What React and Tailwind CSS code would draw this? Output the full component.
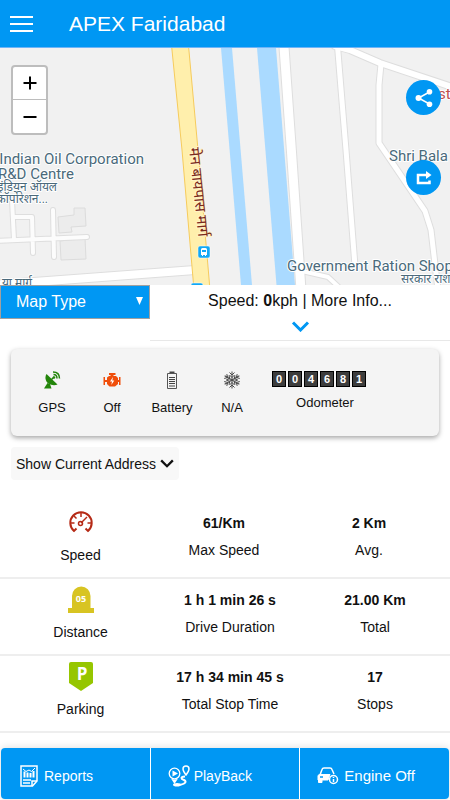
import React from "react";

const MapView = () => (
    <svg
        className="block w-full h-[237px] bg-[#f1f1f1]"
        viewBox="0 48 450 237"
        preserveAspectRatio="xMidYMid slice"
        role="img"
        aria-label="Map"
    >
        {/* water */}
        <path d="M221 48H232L252 285H241Z" fill="#aadaff" />
        <path d="M257 48H276L295 285H276.500Z" fill="#aadaff" />

        {/* buildings */}
        <g fill="#ececec" stroke="#dcdcdc">
            <path d="M58 217L74 215V208H85L86 226L71 227L72 232L59 233Z" />
            <path d="M60 241L85 238L86 259L61 260Z" />
        </g>

        {/* roads, grey edge first and the white on top */}
        <g fill="none" stroke="#dedede" strokeLinecap="round" strokeLinejoin="round">
            <path strokeWidth="11" d="M283.500 40L291 145L301 290" />
            <path strokeWidth="7" d="M337 40L346 150L355 266" />
            <path strokeWidth="8" d="M335 46L350 50L380 63L455 88" />
            <path strokeWidth="7" d="M381 64L379 85V143L425 211L431 230L438 290" />
            <path strokeWidth="6" d="M302 271L328 277L342 290" />
            <path strokeWidth="10" d="M-5 285L195 270" />
            <path strokeWidth="6" d="M-5 241L87 237M12 200L14 240M14 217H32L33 253M53 210L54 257" />
        </g>
        <g fill="none" stroke="#ffffff" strokeLinecap="round" strokeLinejoin="round">
            <path strokeWidth="9" d="M283.500 40L291 145L301 290" />
            <path strokeWidth="5" d="M337 40L346 150L355 266" />
            <path strokeWidth="6" d="M335 46L350 50L380 63L455 88" />
            <path strokeWidth="5" d="M381 64L379 85V143L425 211L431 230L438 290" />
            <path strokeWidth="4" d="M302 271L328 277L342 290" />
            <path strokeWidth="8" d="M-5 285L195 270" />
            <path strokeWidth="4" stroke="#fcfcfc" d="M-5 241L87 237M12 200L14 240M14 217H32L33 253M53 210L54 257" />
        </g>
        <path d="M171 40H188L198 150L210 290H194L182 150Z" fill="#ffefac" stroke="#f6cb5c" />

        {/* bus stops */}
        {[
            [198, 246],
            [191, 283],
        ].map(([x, y]) => (
            <g key={y} transform={`translate(${x} ${y})`}>
                <rect width="12" height="12" rx="2" fill="#12a8f5" stroke="#fff" strokeWidth="0.500" />
                <path d="M3 3.500Q3 2 4.500 2H7.500Q9 2 9 3.500V9H8V10H7V9H5V10H4V9H3Z" fill="#fff" />
                <path d="M4 4H8V6H4Z" fill="#12a8f5" />
            </g>
        ))}

        {/* labels */}
        <g
            fill="#4a6a7b"
            stroke="#ffffff"
            strokeWidth="2"
            strokeLinejoin="round"
            paintOrder="stroke"
            fontFamily="Roboto, 'Noto Sans', sans-serif"
        >
            <g fontSize="15">
                <text x="144" y="164" textAnchor="end">Indian Oil Corporation</text>
                <text x="74" y="179" textAnchor="end">R&amp;D Centre</text>
                <text x="389" y="161">Shri Bala</text>
                <text x="287" y="271">Government Ration Shop</text>
                <text x="438" y="99" fill="#c0504d">str</text>
            </g>
            <g fontSize="12">
                <text x="57" y="191" textAnchor="end">इंडियन ऑयल</text>
                <text x="48" y="203" textAnchor="end">कॉर्पोरेशन...</text>
                <text x="401" y="283">सरकार राशन</text>
                <text x="32" y="287" textAnchor="end">या मार्ग</text>
            </g>
            <text transform="translate(189 148) rotate(84)" fontSize="15" fill="#7b2a1c" stroke="#fff3c4">
                मेन बायपास मार्ग
            </text>
        </g>
    </svg>
);

const GpsIcon = () => (
    <svg width="18" height="18" viewBox="0 0 18 18" fill="none">
        <path d="M3.500 3C1.500 6.500 2.500 10.500 5.500 12.500C8.500 14.500 12 14.500 14.500 13.500Z" fill="#23850a" />
        <path d="M4.500 12L1 17.500H8.500L7 13Z" fill="#23850a" />
        <path d="M8 9L11 6" stroke="#23850a" strokeWidth="1.500" />
        <circle cx="11" cy="6.500" r="1.300" fill="#23850a" />
        <path d="M10.500 3.500Q14 3.500 14 7.500M10 1Q16.500 1 16.500 7.500" stroke="#23850a" strokeWidth="1.500" />
    </svg>
);

const EngineIcon = () => (
    <svg width="18" height="18" viewBox="0 0 18 18">
        <path
            d="M6 2H12.500V4H10.500V5H13L15 7V9H16V6H17.500V14H16V11H15V13L12 15.500H6.500L4 13V11H2V14H0.500V6H2V9H4V6.500L6 5H7.500V4H6Z"
            fill="#f04e0b"
        />
        <path d="M10 6L7 10.500H9L8.300 14L11.300 9.500H9.300Z" fill="#fff" />
    </svg>
);

const BatteryIcon = () => (
    <svg width="18" height="18" viewBox="0 0 18 18" fill="none">
        <path d="M6.500 1.500H11.500" stroke="#444" strokeWidth="2" />
        <path d="M4.500 2.500H13.500V17.500H4.500Z" stroke="#555" />
        <path d="M6 6.500H12M6 8.500H12M6 10.500H12M6 12.500H12M6 15H12" stroke="#444" strokeWidth="1.200" />
    </svg>
);

const SnowIcon = () => (
    <svg width="18" height="18" viewBox="0 0 18 18" fill="none" stroke="#4a4a4a">
        {[0, 60, 120, 180, 240, 300].map((deg) => (
            <path key={deg} transform={`rotate(${deg} 9 9)`} d="M9 9V0.500M6.500 1.500L9 4L11.500 1.500M6.500 4L9 6.500L11.500 4" />
        ))}
    </svg>
);

const SpeedIcon = () => (
    <svg width="24" height="22" viewBox="0 0 24 22" fill="none" stroke="#b52a16" strokeWidth="2">
        <path d="M7.500 17.500L5 20A10.700 10.700 0 1 1 19 20L16.500 17.500" />
        <path d="M12 2V6M2 12H5.500M22 12H18.500M5 5L7.500 7.500" strokeWidth="1.500" />
        <path d="M12 12L18 6" strokeWidth="1.500" />
        <circle cx="11.500" cy="12.500" r="2" strokeWidth="1.500" />
    </svg>
);

const DistanceIcon = () => (
    <svg width="26" height="27" viewBox="0 0 26 27">
        <path d="M4 22V10A9.200 9.500 0 0 1 22.500 10V22H26V27H0V22Z" fill="#d8c422" />
        <text x="13" y="16" textAnchor="middle" fontSize="9" fontWeight="700" fill="#fff" fontFamily="'Open Sans', sans-serif">
            05
        </text>
    </svg>
);

const ParkingIcon = () => (
    <svg width="24" height="29" viewBox="0 0 24 29">
        <path d="M2 0H22Q24 0 24 2V21L12 29L0 21V2Q0 0 2 0Z" fill="#96c600" />
        <text x="13" y="18" textAnchor="middle" fontSize="17" fontWeight="700" fill="#fff" fontFamily="'Open Sans', sans-serif">
            P
        </text>
    </svg>
);

const ReportsIcon = () => (
    <svg width="18" height="22" viewBox="0 0 18 22" fill="none" stroke="#fff" strokeWidth="1.500">
        <path d="M1 1H17V16L12.500 21H1Z" />
        <path d="M17 16H12V21" />
        <path d="M3 4L6 6.500L9 5L11.500 6.500L15 3" strokeWidth="1" />
        <path d="M4.500 6.500V12.500M7.500 7.500V12.500M10.500 8V12.500M13.500 6V12.500" strokeWidth="2" />
        <path d="M3 15H11M3 18H10" />
    </svg>
);

const PlaybackIcon = () => (
    <svg width="22" height="22" viewBox="0 0 22 22" fill="none" stroke="#fff">
        <circle cx="6.500" cy="8.500" r="5.300" strokeWidth="1.300" />
        <path d="M4.500 5.500L10 8.500L4.500 11.500Z" fill="#fff" stroke="none" />
        <path d="M3 13.500Q6.500 15.500 10 13.500L6.500 19Z" fill="#fff" stroke="none" />
        <path d="M18 10C16 7.500 15 5.800 15 4A3 3 0 0 1 21 4C21 5.800 20 7.500 18 10Z" strokeWidth="1.500" />
        <path d="M17 11.500C12 12 13 14 16 15C20 17 16 20 8 20" strokeWidth="2" />
        <ellipse cx="9" cy="19.800" rx="4" ry="1.800" fill="#fff" stroke="none" />
    </svg>
);

const CarIcon = () => (
    <svg width="22" height="18" viewBox="0 0 22 18" fill="none" stroke="#fff" strokeWidth="1.500">
        <path d="M3 8L5 2.500Q5.500 1 7 1H13Q14.500 1 15 2.500L17 7" />
        <path d="M1 9Q1 7.500 3 7.500H13L11 13H5V15.500H1.500V13H1Z" fill="#fff" strokeWidth="1" />
        <path d="M3 10H6" stroke="#0097f3" />
        <circle cx="16.500" cy="12.500" r="4" />
        <path d="M16.500 10V11M16.500 12V15" />
    </svg>
);

const ShareIcon = () => (
    <svg width="18" height="18" viewBox="0 0 18 18" fill="#fff">
        <path d="M14.500 3L3.500 9L14.500 15" fill="none" stroke="#fff" strokeWidth="1.500" />
        <circle cx="3.500" cy="9" r="3" />
        <circle cx="14.500" cy="2.800" r="2.800" />
        <circle cx="14.500" cy="15.200" r="2.800" />
    </svg>
);

const RouteIcon = () => (
    <svg width="18" height="18" viewBox="0 0 18 18" fill="none">
        <path d="M12 6H3V14H14.500V11.500" stroke="#fff" strokeWidth="2.500" />
        <path d="M11 2L16.500 6L11 10Z" fill="#fff" />
    </svg>
);

const Chevron = ({ width, height, color, stroke }) => (
    <svg width={width} height={height} viewBox="0 0 18 11" fill="none">
        <path d="M1.500 1.500L9 9L16.500 1.500" stroke={color} strokeWidth={stroke} />
    </svg>
);

const sensors = [
    { label: "GPS", icon: <GpsIcon /> },
    { label: "Off", icon: <EngineIcon /> },
    { label: "Battery", icon: <BatteryIcon /> },
    { label: "N/A", icon: <SnowIcon /> },
];

const stats = [
    {
        label: "Speed",
        icon: <SpeedIcon />,
        pad: "pr-3",
        values: [
            ["61/Km", "Max Speed"],
            ["2 Km", "Avg."],
        ],
    },
    {
        label: "Distance",
        icon: <DistanceIcon />,
        pad: "",
        values: [
            ["1 h 1 min 26 s", "Drive Duration"],
            ["21.00 Km", "Total"],
        ],
    },
    {
        label: "Parking",
        icon: <ParkingIcon />,
        pad: "",
        values: [
            ["17 h 34 min 45 s", "Total Stop Time"],
            ["17", "Stops"],
        ],
    },
];

const StatRow = ({ label, icon, pad, values }) => (
    <div className="grid grid-cols-[16fr_14fr_15fr] border-b-2 border-[#eeeeee] text-center text-sm leading-5">
        <div className="flex flex-col items-center pt-1 pb-3 pl-px">
            <div className="flex h-8 items-center">{icon}</div>
            <p className="pt-[7px]">{label}</p>
        </div>
        {values.map(([value, name]) => (
            <div key={name} className={`whitespace-nowrap pt-[11px] ${pad}`}>
                <p className="font-bold">{value}</p>
                <p className="pt-[7px]">{name}</p>
            </div>
        ))}
    </div>
);

const App = () => {
    return (
        <div className="flex min-h-screen flex-col bg-white font-['Liberation_Sans',Arial,sans-serif] text-[#111111]">
            <header className="flex h-12 items-center border-b border-[#6fb4f7] bg-[#0097f3] text-white">
                <button aria-label="Menu" className="ml-[10px] flex w-[23px] flex-col gap-[5px] pt-px">
                    <span className="h-0.5 w-full bg-white"></span>
                    <span className="h-0.5 w-full bg-white"></span>
                    <span className="h-0.5 w-full bg-white"></span>
                </button>
                <h1 className="ml-9 text-[21px] leading-6">APEX Faridabad</h1>
            </header>

            <div className="relative">
                <MapView />
                <div className="absolute left-[11px] top-[17px] flex w-[37px] flex-col overflow-hidden rounded border-2 border-[#bdbdbd] bg-white">
                    <button aria-label="Zoom in" className="flex h-[33px] items-center justify-center border-b border-[#bdbdbd]">
                        <svg width="14" height="14" viewBox="0 0 14 14" stroke="#000" strokeWidth="2">
                            <path d="M0.500 7H13.500M7 0.500V13.500" />
                        </svg>
                    </button>
                    <button aria-label="Zoom out" className="flex h-[33px] items-center justify-center">
                        <svg width="14" height="14" viewBox="0 0 14 14" stroke="#000" strokeWidth="2">
                            <path d="M0.500 7H13.500" />
                        </svg>
                    </button>
                </div>
                <div className="absolute right-[9px] top-8 flex flex-col gap-[45px]">
                    <button aria-label="Share" className="flex size-[35px] items-center justify-center rounded-full bg-[#0097f3]">
                        <ShareIcon />
                    </button>
                    <button aria-label="Directions" className="flex size-[35px] items-center justify-center rounded-full bg-[#0097f3]">
                        <RouteIcon />
                    </button>
                </div>
            </div>

            <div className="grid grid-cols-3 items-start">
                <div className="relative">
                    <select
                        aria-label="Map Type"
                        className="block h-[34px] w-full appearance-none border border-[#a0a0a0] bg-[#0097f3] px-[15px] text-base text-white"
                    >
                        <option>Map Type</option>
                    </select>
                    <svg className="pointer-events-none absolute right-[7px] top-3" width="7" height="8" viewBox="0 0 7 8">
                        <path d="M0 0H7L3.500 8Z" fill="#fff" />
                    </svg>
                </div>
                <button className="col-span-2 flex h-14 flex-col items-center border-b border-[#e8e8e8] pt-1">
                    <span className="text-base">
                        Speed: <b>0</b>kph | More Info...
                    </span>
                    <span className="pt-2">
                        <Chevron width="19" height="11" color="#0097f3" stroke="3" />
                    </span>
                </button>
            </div>

            <section className="mx-[11px] mt-2 flex h-[87px] rounded-md bg-[#f4f4f4] px-[11px] text-center text-[13px] leading-4 shadow-[0_2px_5px_rgba(0,0,0,0.35)]">
                {sensors.map(({ label, icon }) => (
                    <div key={label} className="flex w-[60px] flex-col items-center pt-[22px]">
                        {icon}
                        <p className="pt-[11px]">{label}</p>
                    </div>
                ))}
                <div className="flex w-[126px] flex-col items-center pt-[22px]">
                    <div className="flex gap-0.5 pr-3">
                        {"004681".split("").map((digit, i) => (
                            <span
                                key={i}
                                className="h-4 w-[14px] border border-black bg-[#3d3d3d] text-[11px] leading-[14px] font-bold text-white"
                            >
                                {digit}
                            </span>
                        ))}
                    </div>
                    <p className="pt-2">Odometer</p>
                </div>
            </section>

            <button className="ml-[11px] mt-[11px] flex h-[33px] items-center gap-1 self-start rounded bg-[#f8f8f8] px-[5px] text-sm">
                Show Current Address
                <Chevron width="14" height="9" color="#111111" stroke="3" />
            </button>

            <main className="pt-[22px] pb-[14px]">
                {stats.map((row) => (
                    <StatRow key={row.label} {...row} />
                ))}
            </main>

            <nav className="mx-px mt-auto mb-px grid h-[51px] grid-cols-3 gap-px overflow-hidden rounded bg-white text-sm text-white shadow-[0_0_8px_rgba(0,0,0,0.15)]">
                <button className="flex items-center gap-[6px] bg-[#0097f3] pl-[19px] pt-1">
                    <ReportsIcon />
                    Reports
                </button>
                <button className="flex items-center gap-1 bg-[#0097f3] pl-[17px] pt-1">
                    <PlaybackIcon />
                    PlayBack
                </button>
                <button className="flex items-center gap-[5px] bg-[#0097f3] pl-[17px] pt-1 text-[15px]">
                    <CarIcon />
                    Engine Off
                </button>
            </nav>
        </div>
    );
};

export default App;
